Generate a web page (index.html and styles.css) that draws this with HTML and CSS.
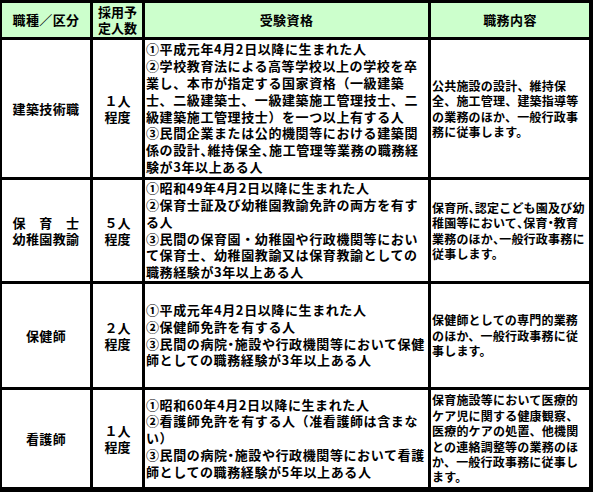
FILE: index.html
```html
<!DOCTYPE html>
<html lang="ja">
<head>
<meta charset="utf-8">
<link rel="stylesheet" href="styles.css">
</head>
<body>
<div class="table">
  <div class="cell head mid"><div class="sp">職種／区分</div></div>
  <div class="cell head mid"><div>採用予<br>定人数</div></div>
  <div class="cell head mid"><div class="sp">受験資格</div></div>
  <div class="cell head mid"><div class="sp">職務内容</div></div>

  <div class="cell mid"><div class="sp">建築技術職</div></div>
  <div class="cell mid"><div>１人<br>程度</div></div>
  <div class="cell"><div class="req">①平成元年4月2日以降に生まれた人<br>②学校教育法による高等学校以上の学校を卒<br>業し、本市が指定する国家資格（一級建築<br>士、二級建築士、一級建築施工管理技士、二<br>級建築施工管理技士）を一つ以上有する人<br>③民間企業または公的機関等における建築関<br>係の設計<span class="h">、</span>維持保全<span class="h">、</span>施工管理等業務の職務経<br>験が3年以上ある人</div></div>
  <div class="cell"><div class="duty">公共施設の設計、維持保<br>全、施工管理、建築指導等<br>の業務のほか、一般行政事<br>務に従事します。</div></div>

  <div class="cell mid"><div class="sp">保　育　士<br>幼稚園教諭</div></div>
  <div class="cell mid"><div>５人<br>程度</div></div>
  <div class="cell"><div class="req">①昭和49年4月2日以降に生まれた人<br>②保育士証及び幼稚園教諭免許の両方を有す<br>る人<br>③民間の保育園・幼稚園や行政機関等におい<br>て保育士、幼稚園教諭又は保育教諭としての<br>職務経験が3年以上ある人</div></div>
  <div class="cell"><div class="duty">保育所<span class="h">、</span>認定こども園及び幼<br>稚園等において<span class="h">、</span>保育<span class="h">・</span>教育<br>業務のほか<span class="h">、</span>一般行政事務に<br>従事します。</div></div>

  <div class="cell mid"><div class="sp">保健師</div></div>
  <div class="cell mid"><div>２人<br>程度</div></div>
  <div class="cell"><div class="req">①平成元年4月2日以降に生まれた人<br>②保健師免許を有する人<br>③民間の病院<span class="h">・</span>施設や行政機関等において保健<br>師としての職務経験が3年以上ある人</div></div>
  <div class="cell"><div class="duty">保健師としての専門的業務<br>のほか、一般行政事務に従<br>事します。</div></div>

  <div class="cell mid"><div class="sp">看護師</div></div>
  <div class="cell mid"><div>１人<br>程度</div></div>
  <div class="cell"><div class="req">①昭和60年4月2日以降に生まれた人<br>②看護師免許を有する人（准看護師は含まな<br>い）<br>③民間の病院<span class="h">・</span>施設や行政機関等において看護<br>師としての職務経験が5年以上ある人</div></div>
  <div class="cell"><div class="duty">保育施設等において医療的<br>ケア児に関する健康観察、<br>医療的ケアの処置、他機関<br>との連絡調整等の業務のほ<br>か、一般行政事務に従事し<br>ます。</div></div>
</div>
</body>
</html>
```

FILE: styles.css
```css
html, body {
  margin: 0;
  padding: 0;
  background: #ffffff;
}

body {
  font-family: "Noto Sans CJK JP", "Noto Sans", sans-serif;
  font-weight: 700;
  color: #000000;
  width: 593px;
  height: 492px;
  overflow: hidden;
}

.table {
  display: grid;
  grid-template-columns: 88px 49px 283px 158px;
  grid-template-rows: 34px 137px 101px 103px 97px;
  gap: 3px;
  padding: 3px 4px 5px 2px;
  background: #000000;
  width: 593px;
  box-sizing: border-box;
}

.cell {
  background: #ffffff;
  display: flex;
  flex-direction: column;
  justify-content: center;
  font-size: 13px;
  line-height: 16px;
  white-space: nowrap;
  min-height: 0;
}

.head {
  background: #ccffcc;
}

.mid {
  align-items: center;
  text-align: center;
}

.sp {
  letter-spacing: 0.4px;
}

.req {
  padding-left: 1px;
  letter-spacing: 0.6px;
  line-height: 16.8px;
}

.duty {
  padding-left: 1px;
  font-size: 12px;
  letter-spacing: 0.2px;
  line-height: 15.4px;
}

.h {
  font-feature-settings: "halt";
}
```
